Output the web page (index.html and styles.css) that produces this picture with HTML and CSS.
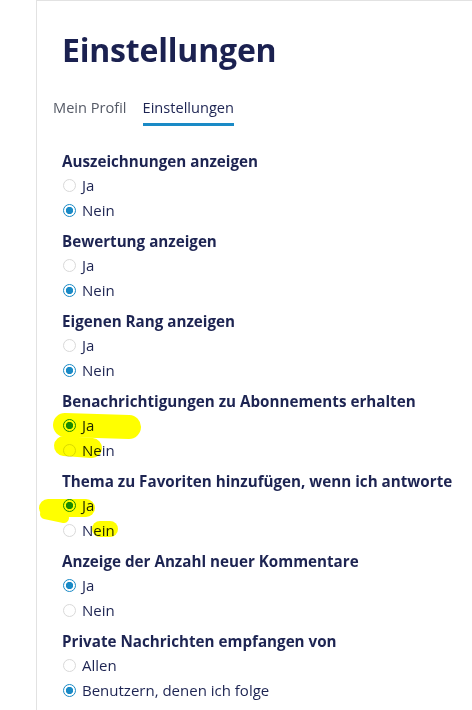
FILE: index.html
```html
<!DOCTYPE html>
<html lang="de">
<head>
<meta charset="utf-8">
<title>Einstellungen</title>
<link rel="stylesheet" href="styles.css">
</head>
<body>
<div class="panel">
  <h1 class="title">Einstellungen</h1>
  <nav class="tabs">
    <a class="tab">Mein Profil</a>
    <a class="tab active">Einstellungen</a>
  </nav>
  <form class="settings">
    <fieldset class="group">
      <legend class="label">Auszeichnungen anzeigen</legend>
      <label class="opt"><input type="radio" name="g1"><span>Ja</span></label>
      <label class="opt"><input type="radio" name="g1" checked><span>Nein</span></label>
    </fieldset>
    <fieldset class="group">
      <legend class="label">Bewertung anzeigen</legend>
      <label class="opt"><input type="radio" name="g2"><span>Ja</span></label>
      <label class="opt"><input type="radio" name="g2" checked><span>Nein</span></label>
    </fieldset>
    <fieldset class="group">
      <legend class="label">Eigenen Rang anzeigen</legend>
      <label class="opt"><input type="radio" name="g3"><span>Ja</span></label>
      <label class="opt"><input type="radio" name="g3" checked><span>Nein</span></label>
    </fieldset>
    <fieldset class="group">
      <legend class="label">Benachrichtigungen zu Abonnements erhalten</legend>
      <label class="opt"><input type="radio" name="g4" checked><span>Ja</span></label>
      <label class="opt"><input type="radio" name="g4"><span>Nein</span></label>
    </fieldset>
    <fieldset class="group">
      <legend class="label">Thema zu Favoriten hinzufügen, wenn ich antworte</legend>
      <label class="opt"><input type="radio" name="g5" checked><span>Ja</span></label>
      <label class="opt"><input type="radio" name="g5"><span>Nein</span></label>
    </fieldset>
    <fieldset class="group">
      <legend class="label">Anzeige der Anzahl neuer Kommentare</legend>
      <label class="opt"><input type="radio" name="g6" checked><span>Ja</span></label>
      <label class="opt"><input type="radio" name="g6"><span>Nein</span></label>
    </fieldset>
    <fieldset class="group">
      <legend class="label">Private Nachrichten empfangen von</legend>
      <label class="opt"><input type="radio" name="g7"><span>Allen</span></label>
      <label class="opt"><input type="radio" name="g7" checked><span>Benutzern, denen ich folge</span></label>
    </fieldset>
  </form>
</div>
<svg class="marker" width="472" height="710" viewBox="0 0 472 710" aria-hidden="true">
  <g fill="none" stroke="#ffff00" stroke-linecap="round" stroke-linejoin="round">
    <path d="M65 425 L129 427" stroke-width="24"/>
    <path d="M64 446 L92 448" stroke-width="20"/>
    <path d="M48 508 L86 508" stroke-width="18"/>
    <path d="M45 514 L64 518" stroke-width="10"/>
    <path d="M100 529 L110 529" stroke-width="16"/>
  </g>
</svg>
</body>
</html>
```

FILE: styles.css
```css
html, body {
  margin: 0;
  padding: 0;
  background: #ffffff;
}

body {
  font-family: "Open Sans", "Noto Sans", sans-serif;
  color: #1d2452;
  width: 472px;
  height: 710px;
  overflow: hidden;
  position: relative;
}

.panel {
  margin-left: 36px;
  border-left: 1px solid #e2e2e2;
  border-top: 1px solid #e2e2e2;
  padding: 27px 0 0 25px;
  min-height: 710px;
  box-sizing: border-box;
}

.title {
  margin: 0;
  font-size: 32px;
  line-height: 44px;
  font-weight: 700;
  color: #1b2150;
  letter-spacing: -0.2px;
}

.tabs {
  display: flex;
  gap: 16px;
  margin: 24px 0 0 -9px;
}

.tab {
  font-size: 14.6px;
  line-height: 22px;
  color: #555a66;
  padding-bottom: 5px;
  border-bottom: 3px solid transparent;
}

.tab.active {
  color: #1d2452;
  border-bottom-color: #1a8ac6;
}

.settings {
  margin-top: 24px;
}

.group {
  border: 0;
  margin: 0 0 7px 0;
  padding: 0;
  display: flex;
  flex-direction: column;
}

.label {
  padding: 0;
  font-size: 15.2px;
  font-weight: 700;
  line-height: 23px;
  color: #1d2452;
}

.opt {
  display: flex;
  align-items: center;
  gap: 6px;
  font-size: 15px;
  line-height: 25px;
  height: 25px;
}

.opt input {
  appearance: none;
  -webkit-appearance: none;
  margin: 0 0 0 1px;
  width: 13px;
  height: 13px;
  border-radius: 50%;
  border: 1px solid #d9d9d9;
  background: #fff;
  box-sizing: border-box;
  flex: none;
}

.opt input:checked {
  border: 1.5px solid #1a8ac6;
  background: radial-gradient(circle, #1a8ac6 0 3.4px, #ffffff 3.9px);
}

.marker {
  position: absolute;
  left: 0;
  top: 0;
  mix-blend-mode: multiply;
  pointer-events: none;
}
```
